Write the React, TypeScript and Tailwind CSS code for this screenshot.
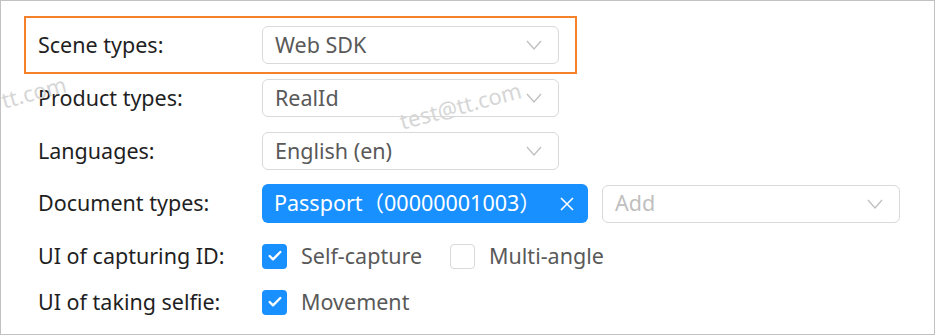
import { Check } from 'lucide-react';

const font = { fontFamily: '"Noto Sans", "Noto Sans CJK SC", sans-serif' };

const Chevron = () => (
  <svg width="16" height="10" viewBox="0 0 16 10" className="shrink-0">
    <polyline points="1,1 8,9 15,1" fill="none" stroke="#bfbfbf" strokeWidth="1.3" />
  </svg>
);

const Select = ({ value, placeholder, width = 'w-[297px]' }: { value?: string; placeholder?: string; width?: string }) => (
  <div className={`${width} h-[38px] flex items-center justify-between pl-[12px] pr-[16px] border border-[#d9d9d9] rounded-[6px] bg-white`}>
    {value ? (
      <span className="text-[21.5px] text-[#595959]">{value}</span>
    ) : (
      <span className="text-[21.5px] text-[#bfbfbf]">{placeholder}</span>
    )}
    <Chevron />
  </div>
);

const Box = ({ checked, label }: { checked: boolean; label: string }) => (
  <div className="flex items-center gap-[14px]">
    {checked ? (
      <span className="w-[25px] h-[25px] rounded-[4px] bg-[#1890ff] flex items-center justify-center">
        <Check className="w-[16px] h-[16px] text-white" strokeWidth={3.5} />
      </span>
    ) : (
      <span className="w-[25px] h-[25px] rounded-[4px] border border-[#d9d9d9] bg-white" />
    )}
    <span className="text-[21.5px] text-[#595959]">{label}</span>
  </div>
);

const Row = ({ label, children, className = '' }: { label: string; children: React.ReactNode; className?: string }) => (
  <div className={`flex items-center pl-[14px] ${className}`}>
    <span className="w-[224px] shrink-0 text-[21.5px] text-[#1f1f1f]">{label}</span>
    {children}
  </div>
);

export default function App() {
  return (
    <div style={font} className="relative w-[935px] h-[335px] overflow-hidden bg-white border border-[#c2c2c2]">
      <div className="pl-[23px] pt-[15px] flex flex-col">
        <div className="w-[553px] h-[58px] flex items-center pl-[12px] border-2 border-[#f5822a]">
          <span className="w-[224px] shrink-0 text-[21.5px] text-[#1f1f1f]">Scene types:</span>
          <Select value="Web SDK" />
        </div>
        <Row label="Product types:" className="mt-[5px] h-[38px]">
          <Select value="RealId" />
        </Row>
        <Row label="Languages:" className="mt-[15px] h-[38px]">
          <Select value="English (en)" />
        </Row>
        <Row label="Document types:" className="mt-[14px] h-[39px]">
          <div className="flex items-center gap-[14px]">
            <div className="w-[326px] h-[39px] rounded-[6px] bg-[#1890ff] flex items-center justify-between pl-[12px] pr-[14px]">
              <span className="text-[21.5px] text-white">Passport（00000001003）</span>
              <svg width="14" height="14" viewBox="0 0 14 14">
                <path d="M1 1 L13 13 M13 1 L1 13" stroke="white" strokeWidth="1.6" />
              </svg>
            </div>
            <Select placeholder="Add" width="w-[298px]" />
          </div>
        </Row>
        <Row label="UI of capturing ID:" className="mt-[14px] h-[38px]">
          <div className="flex items-center gap-[28px]">
            <Box checked label="Self-capture" />
            <Box checked={false} label="Multi-angle" />
          </div>
        </Row>
        <Row label="UI of taking selfie:" className="mt-[8px] h-[38px]">
          <Box checked label="Movement" />
        </Row>
      </div>
      <span className="absolute left-[397px] top-[88px] -rotate-[15deg] text-[22px] text-[#d6d6d6] select-none pointer-events-none">
        test@tt.com
      </span>
      <span className="absolute left-[-58px] top-[82px] -rotate-[15deg] text-[22px] text-[#d6d6d6] select-none pointer-events-none">
        test@tt.com
      </span>
    </div>
  );
}
